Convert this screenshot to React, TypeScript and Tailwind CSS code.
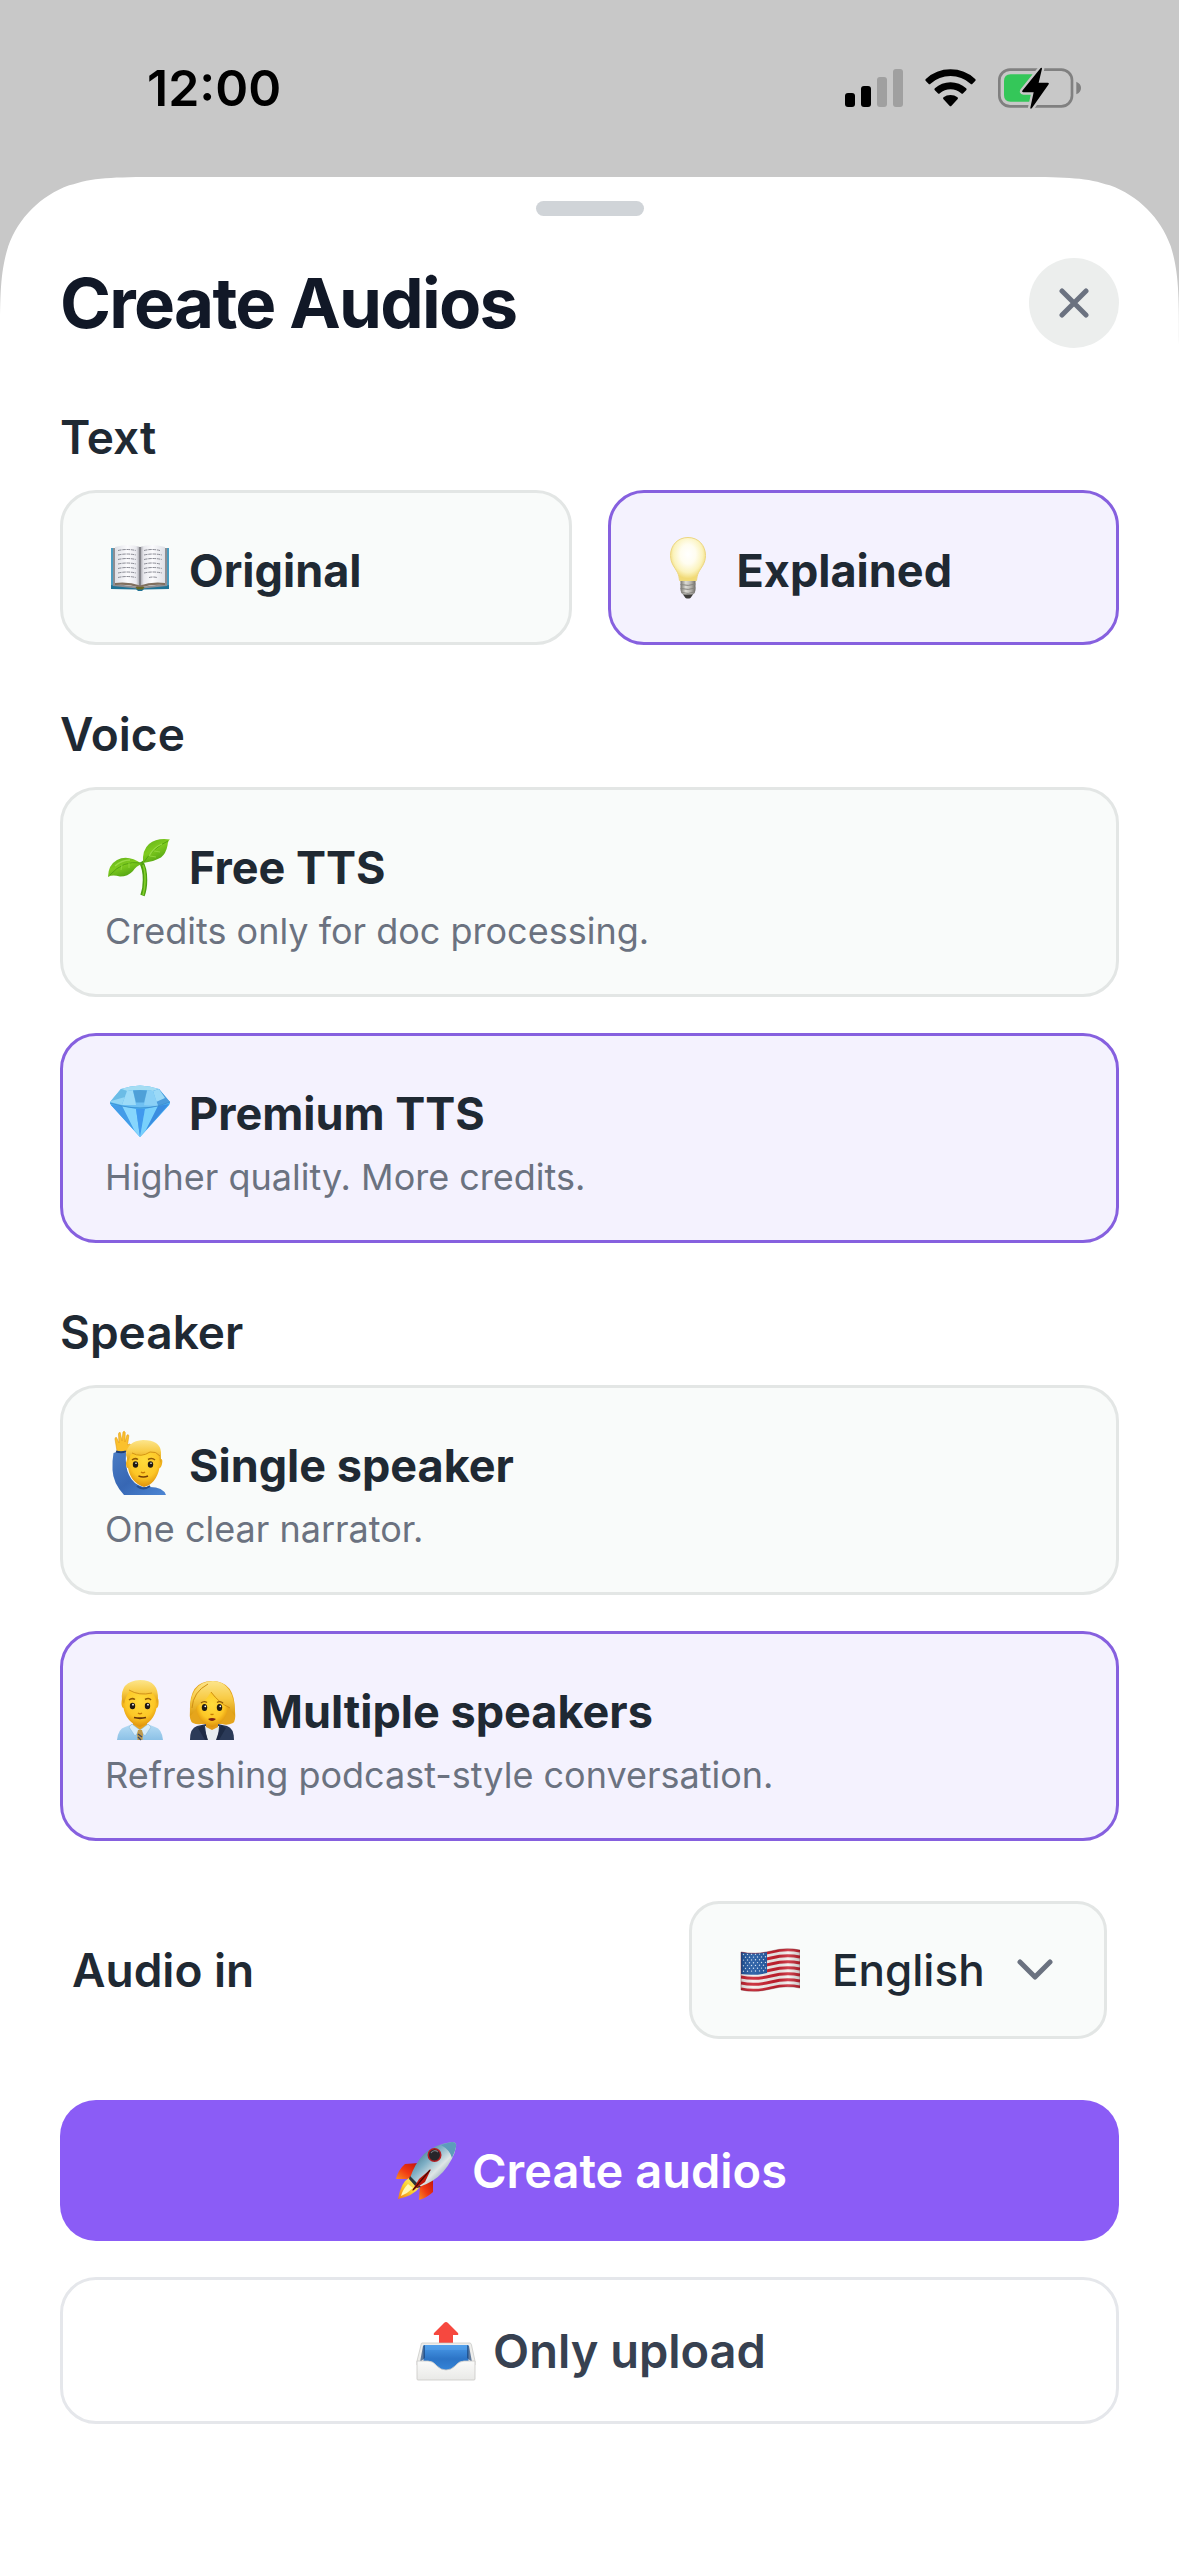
import React, { useState } from "react";

const emojiBox = "size-[66px] shrink-0";

function BookIcon() {
  return (
    <svg viewBox="0 0 66 66" className={emojiBox} aria-hidden="true">
      <defs>
        <linearGradient id="pageL" x1="0" x2="1">
          <stop offset="0" stopColor="#dfe0e6" />
          <stop offset="0.5" stopColor="#fbfbfd" />
          <stop offset="0.85" stopColor="#e9e9ee" />
          <stop offset="1" stopColor="#9c9ca3" />
        </linearGradient>
        <linearGradient id="pageR" x1="1" x2="0">
          <stop offset="0" stopColor="#dfe0e6" />
          <stop offset="0.5" stopColor="#fbfbfd" />
          <stop offset="0.85" stopColor="#e9e9ee" />
          <stop offset="1" stopColor="#9c9ca3" />
        </linearGradient>
      </defs>
      <path d="M4 13h4v37H4zM58 13h4v37h-4z" fill="#4a9cc0" />
      <path d="M4 50l25 2q4 1.600 8 0l25-2v4l-25 .5q-4 2.500-8 0L4 54z" fill="#1f7396" />
      <path d="M6 13h3v36l23 3 1-3 1 3 23-3V13h3v38l-24 2.500q-3 1.500-6 0L6 51z" fill="#8e8e93" />
      <path d="M8 12q14-4 25 0v39q-11-4-25-2z" fill="url(#pageL)" />
      <path d="M58 12q-14-4-25 0v39q11-4 25-2z" fill="url(#pageR)" />
      <path d="M8 48q14-1.500 25 2.500Q44 46.500 58 48v2q-14-1-25 3-11-4-25-3z" fill="#7f6f5f" />
      <path d="M33 12v39" stroke="#68686e" strokeWidth="1.200" />
      <g stroke="#8b8c95" strokeWidth="1" fill="none">
        <path d="M11 15.500q9-2 18 0M11 20q9-2 18 0M11 24.500q9-2 18 0M11 29q9-2 18 0M11 33.500q9-2 18 0M11 38q9-2 18 0M11 42.500q9-2 18 0" strokeDasharray="3.500 .8" />
        <path d="M37 15.500q8-2 16 0M37 20q9-2 18 0M37 24.500q9-2 18 0M37 29q8-2 16 0M37 33.500q9-2 18 0M37 38q9-2 18 0M42 42.500q4-1 8 0" strokeDasharray="3.500 .8" />
      </g>
      <path d="M28.500 52h9l-2 3h-5z" fill="#686a24" />
      <path d="M30 54.500h6l-1 1.500h-4z" fill="#1f7396" />
    </svg>
  );
}

function BulbIcon() {
  return (
    <svg viewBox="0 0 66 66" className={emojiBox} aria-hidden="true">
      <defs>
        <radialGradient id="bulb" cx="0.5" cy="0.38" r="0.55">
          <stop offset="0" stopColor="#ffffff" />
          <stop offset="0.4" stopColor="#fffdf0" />
          <stop offset="0.75" stopColor="#fbf3bd" />
          <stop offset="1" stopColor="#f1da76" />
        </radialGradient>
        <linearGradient id="screw" x1="0" x2="1">
          <stop offset="0" stopColor="#77756f" />
          <stop offset="0.35" stopColor="#dddcd6" />
          <stop offset="0.7" stopColor="#b4b2ac" />
          <stop offset="1" stopColor="#6e6c67" />
        </linearGradient>
      </defs>
      <path d="M33 2.500c10.500 0 17.500 8 17.500 18 0 8-4.500 12-7 17-1.500 3-1.500 5-2 8-2 1.500-15 1.500-17 0-.5-3-.5-5-2-8-2.500-5-7-9-7-17 0-10 7-18 17.500-18z" fill="url(#bulb)" stroke="#ecd681" strokeWidth="1" />
      <path d="M25.500 46h15v9q0 3-3 5h-9q-3-2-3-5z" fill="url(#screw)" />
      <path d="M25.500 49.500q8 2 15-.5M25.500 53.500q8 2 15-.5M26.500 57.500q7 2 13-.5" stroke="#86847f" strokeWidth="1" fill="none" />
      <path d="M28 59.500h10l-2.500 3.500q-2.500 1-5 0z" fill="#3f3e3c" />
    </svg>
  );
}

function SproutIcon() {
  return (
    <svg viewBox="0 0 66 66" className={emojiBox} aria-hidden="true">
      <defs>
        <linearGradient id="leaf" x1="0" y1="0" x2="0.6" y2="1">
          <stop offset="0" stopColor="#5fae1a" />
          <stop offset="0.5" stopColor="#7fcb1e" />
          <stop offset="1" stopColor="#4fa012" />
        </linearGradient>
      </defs>
      <path d="M34 30q4 6 4 18 0 9-2.500 15.500" stroke="#4f9f12" strokeWidth="4.500" fill="none" />
      <path d="M36 33q2.500 6 2 17-.3 7-2 13" stroke="#82cf2a" strokeWidth="1.600" fill="none" />
      <path d="M36 31q-1-13 6-19 8-6.500 21-4.500-2 1-2.500 6-1.500 8-6.500 12-7 4-18 5.500z" fill="url(#leaf)" />
      <path d="M1 45q0-12 9-17 11-6 25 4-6 2-9 7-5 5.500-13 5.500-8-2-12 .5z" fill="url(#leaf)" />
      <path d="M37 30q9-14 24-21M3 43q13-15 31-12" stroke="#4a990e" strokeWidth="0.800" fill="none" />
      <path d="M42 24q5-9 13-12M8 34q7-6 15-6" stroke="#98da43" strokeWidth="1.300" fill="none" />
      <path d="M47 19l6 1M43 24l6 1M15 33l-1 5M22 31l0 5" stroke="#8fd43a" strokeWidth="1" />
    </svg>
  );
}

function GemIcon() {
  return (
    <svg viewBox="0 0 66 66" className={emojiBox} aria-hidden="true">
      <path d="M14 11q19-7 38 0l11 13q0 2-1 3L33 59 4 27q-1-1-1-3z" fill="#58bbf5" />
      <path d="M14 11q19-7 38 0l-6 2q-13-2-26 0z" fill="#a5ddf3" />
      <path d="M14 11l6 2-5 14-12-3z" fill="#93d6f5" />
      <path d="M14 11l6 2-2 6-14 4z" fill="#6bbce6" />
      <path d="M52 11l11 13-12 4-5-15z" fill="#4b9bdc" />
      <path d="M52 11l6 9-9 4-3-11z" fill="#9bd9f7" />
      <path d="M20 13q13-2 26 0l5 15q-18 3-36-1z" fill="#6fc0f2" />
      <path d="M20 13l6-.7 3 14.700-14 0z" fill="#9cdbf8" />
      <path d="M46 13l-6-.7-3 15 14 .7z" fill="#8ad0f6" />
      <path d="M26 12.500q7-1 14 0l-3 12h-8z" fill="#4ea0d8" />
      <path d="M3 25l12 3q18 4 36 0l12-4-1 3-29 32L4 27z" fill="#49aef4" />
      <path d="M15 28l14 3 4 28-6-7z" fill="#86d6fd" />
      <path d="M4 27l11 1 12 24z" fill="#439ce8" />
      <path d="M29 31h9l-5 28z" fill="#4099ee" />
      <path d="M38 31l13-3-12 24-6 7z" fill="#78d0fc" />
      <path d="M51 28l11-2-23 26z" fill="#3a8de0" />
      <path d="M3 25l12 3q18 4 36 0l12-4" stroke="#3c8cca" strokeWidth="0.800" fill="none" />
    </svg>
  );
}

function SkinDefs() {
  return (
    <defs>
      <radialGradient id="skin" cx="0.5" cy="0.4" r="0.6">
        <stop offset="0" stopColor="#ffdc3c" />
        <stop offset="0.65" stopColor="#fdc726" />
        <stop offset="1" stopColor="#dd8f0a" />
      </radialGradient>
      <linearGradient id="hair" x1="0" y1="0" x2="0" y2="1">
        <stop offset="0" stopColor="#fce58b" />
        <stop offset="0.5" stopColor="#f8cb45" />
        <stop offset="1" stopColor="#d9980f" />
      </linearGradient>
      <linearGradient id="sleeve" x1="0" y1="0" x2="1" y2="1">
        <stop offset="0" stopColor="#4a7cc4" />
        <stop offset="0.5" stopColor="#3767b4" />
        <stop offset="1" stopColor="#4d86d4" />
      </linearGradient>
      <linearGradient id="shirt" x1="0" y1="0" x2="0" y2="1">
        <stop offset="0" stopColor="#b9def6" />
        <stop offset="1" stopColor="#8cc1e6" />
      </linearGradient>
    </defs>
  );
}

function RaisedHandIcon() {
  return (
    <svg viewBox="0 0 66 66" className={emojiBox} aria-hidden="true">
      <SkinDefs />
      <path d="M10 21L8 9q0-2 1.500-1.500L12 13l-.5-9q.2-2 1.700-1.500L15 11l1-9q1.500-1.500 2.200.5L18 12l2-7q1.500-1 1.800.8L20.500 15l2-1q1.500 0 1 2L19 22h-8z" fill="#fbc12c" stroke="#e39b13" strokeWidth="0.600" />
      <path d="M6.500 23q6-2.500 12.500 0-1 14 3 22 4 9 14 12h7q13 0 16 8H17Q6 53 5.500 40 5 31 6.500 23z" fill="url(#sleeve)" />
      <path d="M9 21.500q5 1.500 10 0" stroke="#1e3e76" strokeWidth="2" fill="none" />
      <path d="M30 56q6 5 13 0" stroke="#264f91" strokeWidth="2" fill="none" />
      <path d="M20 29q0-17 17-17t17 17q2 0 1 5-1 4-2.500 4Q49 54 37 57 24 53 21 38q-2 0-2-5z" fill="url(#skin)" />
      <path d="M19 25q1-14 17-15 17 0 18 12v11q-2-3-2-7-4-4-9-4-7 4-15 2-5-1-5 3l-2 4z" fill="url(#hair)" />
      <path d="M25 23q9 5 18-1 6-1 10 4" stroke="#cf8d10" strokeWidth="0.900" fill="none" />
      <path d="M25 30q3-2.500 6-.5M41 29.500q4-2 7 .5" stroke="#905908" strokeWidth="1.500" fill="none" />
      <ellipse cx="28.500" cy="34.500" rx="2.700" ry="3.200" fill="#1f1a13" />
      <ellipse cx="43.500" cy="34.500" rx="2.700" ry="3.200" fill="#1f1a13" />
      <circle cx="29" cy="33.300" r="0.800" fill="#fff" />
      <circle cx="44" cy="33.300" r="0.800" fill="#fff" />
      <path d="M34 42q2 1.500 4 0" stroke="#c67b05" strokeWidth="1.500" fill="none" />
      <path d="M31.500 46q5 2 9.500 0" stroke="#743c06" strokeWidth="1.500" fill="none" />
    </svg>
  );
}

function OfficeManIcon() {
  return (
    <svg viewBox="0 0 66 66" className={emojiBox} aria-hidden="true">
      <SkinDefs />
      <path d="M10 64q1-11 8-13l10-4h10l10 4q7 2 8 13z" fill="url(#shirt)" />
      <path d="M26 44h14v7l-7 6-7-6z" fill="#e9a31a" />
      <path d="M25 48l8 6-5 6-6-9zM41 48l-8 6 5 6 6-9z" fill="#d7ecf9" stroke="#83b0d0" strokeWidth="0.500" />
      <path d="M31 54h4l1 4-.5 6h-5l-.5-6z" fill="#c09a4c" />
      <path d="M31 58l4 3M31 61l3 3" stroke="#3b4964" strokeWidth="1.300" />
      <path d="M16 22Q16 8 33 8t17 14q2 0 1.500 6-.5 4-2 4Q47 46 33 51 19 46 16.500 32q-1.500 0-2-4 0-6 1.500-6z" fill="url(#skin)" />
      <path d="M15 24Q13 5 33 4q19 0 18 20l-1 4q-1-7-4-11-13 4-23-2-4 4-6 13z" fill="url(#hair)" />
      <path d="M22 14q10 6 23 3" stroke="#cf8f13" strokeWidth="0.900" fill="none" />
      <path d="M22 24q3-2.500 6-.5M38 23.500q4-2 6 .5" stroke="#8e5806" strokeWidth="1.500" fill="none" />
      <ellipse cx="25.500" cy="30" rx="2.700" ry="3.300" fill="#1f1a13" />
      <ellipse cx="40.500" cy="30" rx="2.700" ry="3.300" fill="#1f1a13" />
      <circle cx="26" cy="28.700" r="0.900" fill="#fff" />
      <circle cx="41" cy="28.700" r="0.900" fill="#fff" />
      <path d="M31 37q2 1.500 4 0" stroke="#c67b05" strokeWidth="1.500" fill="none" />
      <path d="M27 41.500q6 1.500 12 0" stroke="#67340a" strokeWidth="1.800" fill="none" />
    </svg>
  );
}

function OfficeWomanIcon() {
  return (
    <svg viewBox="0 0 66 66" className={emojiBox} aria-hidden="true">
      <SkinDefs />
      <path d="M14 47q-4-2-3-12Q10 5 33 5t23 30q1 10-2 12-6 3-11 1H22q-4 1-8-1z" fill="#e5a51c" />
      <path d="M11 64q0-12 7-14l9-2h12l9 2q7 2 7 14z" fill="#2b3a58" />
      <path d="M26 50h14l-1 14H28z" fill="#e8edf0" />
      <path d="M27 44h12v7l-6 3-6-3z" fill="#e29a18" />
      <path d="M24 49l5 15h-3l-7-12zM42 49l-5 15h3l7-12z" fill="#1e2b45" />
      <path d="M17 29q1-16 16-16t16 16q0 17-16 22-16-5-16-22z" fill="url(#skin)" />
      <path d="M11 40Q9 6 34 5q22 1 22 35-3-3-6-9-9-5-18-15-6 10-14 14-2 6-7 10z" fill="url(#hair)" />
      <path d="M32 16q8 11 19 16M29 8q-15 8-16 24" stroke="#cf8f13" strokeWidth="1" fill="none" />
      <path d="M22 27q3-2.500 6-.5M38 26.500q3-2 6 .5" stroke="#8e5806" strokeWidth="1.300" fill="none" />
      <ellipse cx="25.500" cy="31.500" rx="2.700" ry="3.500" fill="#1f1a13" />
      <ellipse cx="40.500" cy="31.500" rx="2.700" ry="3.500" fill="#1f1a13" />
      <circle cx="26.300" cy="30.300" r="0.900" fill="#fff" />
      <circle cx="41.300" cy="30.300" r="0.900" fill="#fff" />
      <path d="M31.500 38q1.500 1.200 3 0" stroke="#c67b05" strokeWidth="1.300" fill="none" />
      <path d="M29 43q4-2 8 0-4 4-8 0z" fill="#7c1f14" />
    </svg>
  );
}

function FlagIcon() {
  const stars = [0, 1, 2, 3, 4, 5, 6].flatMap((r) =>
    [0, 1, 2, 3, 4, 5].map((c) => ({ x: 9.5 + c * 4 + (r % 2) * 2, y: 17.5 + r * 2.8 - c * 0.1 }))
  );
  return (
    <svg viewBox="0 0 66 66" className={emojiBox} aria-hidden="true">
      <defs>
        <clipPath id="flag">
          <path d="M7 15q14 3 30-1 15-4 29-1v38q-14-3-29 1-16 4-30 1z" />
        </clipPath>
        <linearGradient id="fold" x1="0" x2="1">
          <stop offset="0" stopColor="#000" stopOpacity="0.150" />
          <stop offset="0.2" stopColor="#fff" stopOpacity="0.100" />
          <stop offset="0.6" stopColor="#000" stopOpacity="0.080" />
          <stop offset="0.8" stopColor="#fff" stopOpacity="0.150" />
          <stop offset="1" stopColor="#000" stopOpacity="0.200" />
        </linearGradient>
      </defs>
      <g clipPath="url(#flag)">
        <path d="M0 0h66v66H0z" fill="#f4efee" />
        {[0, 1, 2, 3, 4, 5, 6].map((i) => (
          <path key={i} d={`M7 ${16 + i * 6}q14 3 30-1 15-4 29-1`} stroke="#c8202f" strokeWidth="3" fill="none" />
        ))}
        <path d="M7 14h26v22q-13 3-26 1z" fill="#1f56a0" />
        {stars.map((s, i) => (
          <circle key={i} cx={s.x} cy={s.y} r="0.700" fill="#d6e4f4" />
        ))}
        <path d="M7 10h59v46H7z" fill="url(#fold)" />
      </g>
      <path d="M7 15q14 3 30-1 15-4 29-1v38q-14-3-29 1-16 4-30 1z" fill="none" stroke="#7a1620" strokeOpacity="0.400" strokeWidth="1" />
    </svg>
  );
}

function RocketIcon() {
  return (
    <svg viewBox="0 0 66 66" className={emojiBox} aria-hidden="true">
      <defs>
        <linearGradient id="hull" x1="0" y1="0" x2="1" y2="1">
          <stop offset="0.1" stopColor="#2f6379" />
          <stop offset="0.4" stopColor="#7fb0c6" />
          <stop offset="0.6" stopColor="#dfe6e6" />
          <stop offset="0.9" stopColor="#557f93" />
        </linearGradient>
        <linearGradient id="fin" x1="1" y1="0" x2="0" y2="1">
          <stop offset="0" stopColor="#c11208" />
          <stop offset="0.55" stopColor="#f03a14" />
          <stop offset="1" stopColor="#fb8b23" />
        </linearGradient>
        <linearGradient id="flame" x1="1" y1="0" x2="0" y2="1">
          <stop offset="0" stopColor="#fff7a6" />
          <stop offset="0.5" stopColor="#fbd22f" />
          <stop offset="1" stopColor="#f07a14" />
        </linearGradient>
      </defs>
      <path d="M27 25l-14 1Q6 32 4 41h15z" fill="url(#fin)" />
      <path d="M41 41v13q-5 5-14 8l1-15z" fill="url(#fin)" />
      <path d="M17 40q-8 4-11 21 15-3 22-12z" fill="url(#flame)" />
      <path d="M16 46q-5 5-7 12 7-3 12-8z" fill="#fff8b5" />
      <path d="M60 4q5 0 4 5-2 12-13 25Q42 44 27 49l-9-9q5-15 14-24Q43 6 60 4z" fill="url(#hull)" />
      <path d="M60 4q5 0 4 5-1 5-4 11-2-8-11-13 6-2 11-3z" fill="#5d9cbb" />
      <path d="M18 38l11 11-4 1-8-9z" fill="#29343b" />
      <path d="M39 31l-12 10-7 12 13-9z" fill="#bb160b" />
      <path d="M38 32L21 52" stroke="#4e0803" strokeWidth="1.200" />
      <circle cx="42.500" cy="17" r="7" fill="#b31e22" />
      <circle cx="42.500" cy="17" r="5.500" fill="#27252a" />
      <path d="M39 15q3-4 7-1" stroke="#77777d" strokeWidth="1.200" fill="none" />
    </svg>
  );
}

function OutboxIcon() {
  return (
    <svg viewBox="0 0 66 66" className={emojiBox} aria-hidden="true">
      <defs>
        <linearGradient id="inside" x1="0" y1="0" x2="0" y2="1">
          <stop offset="0" stopColor="#4a9bea" />
          <stop offset="0.5" stopColor="#2c74c6" />
          <stop offset="1" stopColor="#3688dc" />
        </linearGradient>
        <linearGradient id="front" x1="0" y1="0" x2="0" y2="1">
          <stop offset="0" stopColor="#fafaf9" />
          <stop offset="1" stopColor="#e9e9e7" />
        </linearGradient>
      </defs>
      <path d="M33 4q1 0 2 1l10 10q1 2-1 2h-4v8q0 1-1 1H27q-1 0-1-1v-8h-4q-2 0-1-2L31 5q1-1 2-1z" fill="#f6483f" />
      <path d="M9 25h48q1 0 1.500 2L62 43v4H4v-4l4-16q0-2 1-2z" fill="#eeeeec" stroke="#c4c4c2" strokeWidth="0.700" />
      <path d="M10.500 27h45v28h-45z" fill="url(#inside)" />
      <path d="M11 27h44v5H11z" fill="#62a9ee" opacity="0.400" />
      <path d="M10 28l2-1v13l-5 4zM56 28l-2-1v13l5 4z" fill="#173e72" opacity="0.650" />
      <path d="M4 43h11q5 0 9 5 4 4 9 4t9-4q4-5 9-5h11v18q0 1-1 1H5q-1 0-1-1z" fill="url(#front)" stroke="#c9c8c5" strokeWidth="0.800" />
    </svg>
  );
}

function StatusBar() {
  return (
    <div className="flex h-[177px] items-start justify-between pt-[54px] pr-[98px] pl-[147px]">
      <span className="text-[50px] leading-[68px] font-semibold text-black">12:00</span>
      <div className="flex h-[68px] items-center gap-[22px]">
        <svg viewBox="0 0 58 40" className="h-10 w-[58px]" role="img" aria-label="Signal">
          <rect x="0" y="25" width="10" height="14" rx="3" fill="#000" />
          <rect x="16" y="18" width="10" height="21" rx="3" fill="#000" />
          <rect x="32" y="9" width="10" height="30" rx="3" fill="#a0a0a0" />
          <rect x="48" y="1" width="10" height="38" rx="3" fill="#a0a0a0" />
        </svg>
        <svg viewBox="0 0 152 120" className="h-10 w-[51px]" role="img" aria-label="Wi-Fi">
          <path d="M76 4q43 0 74 29 3 3 0 6l-8 8q-3 3-6 0-26-23-60-23T16 47q-3 3-6 0l-8-8q-3-3 0-6Q33 4 76 4z" fill="#000" />
          <path d="M76 43q27 0 47 18 3 3 0 6l-9 9q-3 3-6 0-14-12-32-12T44 76q-3 3-6 0l-9-9q-3-3 0-6 20-18 47-18z" fill="#000" />
          <path d="M76 81q12 0 21 7 3 3 0 6L79 113q-3 3-6 0L55 94q-3-3 0-6 9-7 21-7z" fill="#000" />
        </svg>
        <svg viewBox="0 0 249 126" className="h-[42px] w-[83px]" role="img" aria-label="Battery charging">
          <rect x="4" y="8" width="218" height="110" rx="32" fill="none" stroke="#808080" strokeWidth="8" />
          <path d="M235 44q14 6 14 19t-14 19z" fill="#808080" />
          <path d="M38 22h66v82H38q-20 0-20-20V42q0-20 20-20z" fill="#34c759" />
          <path d="M128 3q4-2 4 2l-10 42h27q6 0 2 6l-49 70q-5 5-5-1l10-46H76q-6 0-2-6z" fill="#c8c8c8" stroke="#c8c8c8" strokeWidth="14" />
          <path d="M128 3q4-2 4 2l-10 42h27q6 0 2 6l-49 70q-5 5-5-1l10-46H76q-6 0-2-6z" fill="#000" />
        </svg>
      </div>
    </div>
  );
}

/* Backdrop-coloured wedge that gives the sheet its continuous corner curve. */
function SheetCorner({ className }: { className: string }) {
  return (
    <svg viewBox="0 0 153 153" className={`absolute top-0 size-[168px] ${className}`} aria-hidden="true">
      <path d="M0 0H153C109 0 87 0 67 6.500L63 7.500C37 17 17 37 7.500 63 0 87 0 109 0 153z" fill="#c8c8c8" />
    </svg>
  );
}

type OptionProps = {
  name: string;
  value: string;
  title: string;
  note?: string;
  icon: React.ReactNode;
  selected: string;
  onSelect: (value: string) => void;
};

function Option({ name, value, title, note, icon, selected, onSelect }: OptionProps) {
  return (
    <label className="relative block cursor-pointer rounded-[36px] border-3 border-[#e3e6e5] bg-[#f9fbfa] px-[42px] pt-[42px] pb-[41px] has-checked:border-[#8660df] has-checked:bg-[#f4f2fe]">
      <input
        type="radio"
        name={name}
        value={value}
        checked={selected === value}
        onChange={() => onSelect(value)}
        className="sr-only"
      />
      <span className="flex h-[66px] items-center gap-4 pl-0.5">
        <span className="flex gap-1.5">{icon}</span>
        <span className="pt-1.5 text-[45px] leading-[54px] font-bold text-[#1f2933]">{title}</span>
      </span>
      {note && <span className="-mb-[5px] block pt-1.5 text-[36px] leading-[54px] text-[#6b7280]">{note}</span>}
    </label>
  );
}

function Group({ label, children }: { label: string; children: React.ReactNode }) {
  return (
    <fieldset className="mt-[60px]">
      <legend className="mb-6 text-[46px] leading-[58px] font-semibold text-[#1f2933]">{label}</legend>
      {children}
    </fieldset>
  );
}

export default function App() {
  const [text, setText] = useState("explained");
  const [voice, setVoice] = useState("premium");
  const [speaker, setSpeaker] = useState("multiple");
  const [language, setLanguage] = useState("en");

  return (
    <div className="flex min-h-screen flex-col bg-[#c8c8c8] font-['Inter',sans-serif]">
      <StatusBar />
      <main className="relative flex grow flex-col bg-white px-[60px] pt-6 pb-[131px]">
        <SheetCorner className="left-0" />
        <SheetCorner className="right-0 -scale-x-100" />
        <div className="mx-auto h-[15px] w-[108px] rounded-full bg-[#d0d4d8]" />
        <header className="mt-[42px] flex items-center justify-between">
          <h1 className="text-[69px] leading-[90px] font-bold tracking-tight text-[#111827]">Create Audios</h1>
          <button type="button" aria-label="Close" className="flex size-[90px] items-center justify-center rounded-full bg-[#eceeed]">
            <svg viewBox="0 0 30 30" className="size-[30px]" fill="none" stroke="#6b7280" strokeWidth="5" strokeLinecap="round">
              <path d="M3 3l24 24M27 3L3 27" />
            </svg>
          </button>
        </header>

        <Group label="Text">
          <div className="grid grid-cols-2 gap-9">
            <Option name="text" value="original" title="Original" icon={<BookIcon />} selected={text} onSelect={setText} />
            <Option name="text" value="explained" title="Explained" icon={<BulbIcon />} selected={text} onSelect={setText} />
          </div>
        </Group>

        <Group label="Voice">
          <div className="grid gap-9">
            <Option name="voice" value="free" title="Free TTS" note="Credits only for doc processing." icon={<SproutIcon />} selected={voice} onSelect={setVoice} />
            <Option name="voice" value="premium" title="Premium TTS" note="Higher quality. More credits." icon={<GemIcon />} selected={voice} onSelect={setVoice} />
          </div>
        </Group>

        <Group label="Speaker">
          <div className="grid gap-9">
            <Option name="speaker" value="single" title="Single speaker" note="One clear narrator." icon={<RaisedHandIcon />} selected={speaker} onSelect={setSpeaker} />
            <Option
              name="speaker"
              value="multiple"
              title="Multiple speakers"
              note="Refreshing podcast-style conversation."
              icon={
                <>
                  <OfficeManIcon />
                  <OfficeWomanIcon />
                </>
              }
              selected={speaker}
              onSelect={setSpeaker}
            />
          </div>
        </Group>

        <div className="mt-[60px] flex items-center justify-between px-3">
          <label htmlFor="language" className="text-[46px] leading-[58px] font-semibold text-[#1f2933]">
            Audio in
          </label>
          <div className="flex h-[138px] items-center rounded-[30px] border-3 border-[#e3e6e5] bg-[#f9fbfa] pr-[51px] pl-[42px]">
            <FlagIcon />
            <select
              id="language"
              value={language}
              onChange={(e) => setLanguage(e.target.value)}
              className="ml-8 appearance-none bg-transparent text-[44px] leading-[54px] font-medium text-[#1f2933] outline-none"
            >
              <option value="en">English</option>
            </select>
            <svg viewBox="0 0 36 22" className="ml-8 h-[22px] w-9" fill="none" stroke="#6b7280" strokeWidth="5" strokeLinecap="round" strokeLinejoin="round" aria-hidden="true">
              <path d="M3 3l15 15L33 3" />
            </svg>
          </div>
        </div>

        <button type="button" className="mt-[61px] flex h-[141px] items-center justify-center gap-3.5 rounded-[36px] bg-[#8b5cf6] text-[47px] leading-[58px] font-semibold text-white">
          <RocketIcon />
          Create audios
        </button>
        <button type="button" className="mt-9 flex h-[147px] items-center justify-center gap-3.5 rounded-[36px] border-3 border-[#e5e7eb] bg-white text-[47px] leading-[58px] font-semibold text-[#374151]">
          <OutboxIcon />
          Only upload
        </button>
      </main>
    </div>
  );
}
